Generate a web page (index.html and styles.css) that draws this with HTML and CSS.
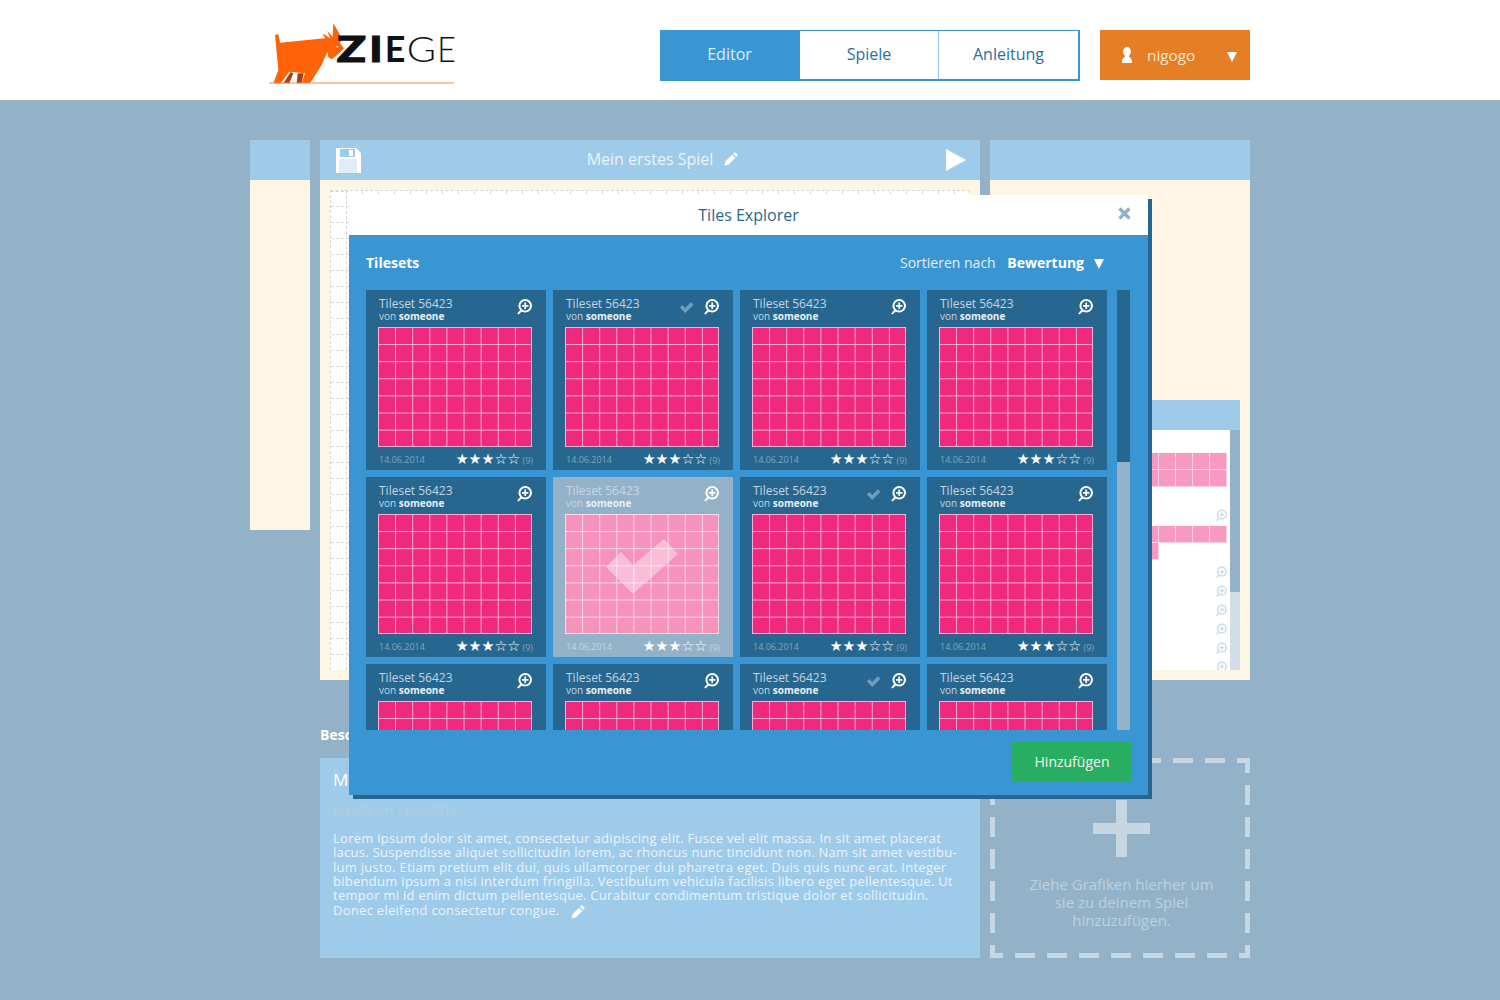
FILE: index.html
```html
<!DOCTYPE html>
<html lang="de">
<head>
  <meta charset="UTF-8" />
  <title>Ziege - Editor</title>
  <link rel="stylesheet" href="styles.css">
</head>
<body>
  <!-- icons used more than once -->
  <svg class="icon-defs" width="0" height="0">
    <symbol id="i-zoom" viewBox="0 0 16 16">
      <circle cx="9.2" cy="6.8" r="5.8" fill="none" stroke="currentColor" stroke-width="2"/>
      <path d="M9.2 3.600v6.400M6 6.800h6.400" fill="none" stroke="currentColor" stroke-width="1.700"/>
      <path d="M4.600 10.600l-3.400 3.800 1.200 1 3.800-3.200z" fill="currentColor"/>
    </symbol>
    <symbol id="i-check" viewBox="0 0 16 13">
      <path d="M1 6.500l2.600-2.600 3 3L12.600.8 15.400 3.500 6.600 12.400z" fill="currentColor"/>
    </symbol>
    <symbol id="i-pencil" viewBox="0 0 14 14">
      <path d="M0.500 13.500l1-4.200 6.600-6.600 3.200 3.200-6.600 6.600zM9 1.800l1-1c.5-.5 1.200-.5 1.700 0l1.500 1.500c.5.5.5 1.200 0 1.700l-1 1z" fill="currentColor"/>
    </symbol>
  </svg>

  <header class="topbar">
    <div class="wrap">
      <a class="logo" href="#">
        <svg width="230" height="90" viewBox="0 0 690 270">
          <path d="M100 220l22-34 8 4-12 30zM140 220l3-30h18l-6 30z" fill="#a8430c"/>
          <path d="M75 75l10-3 5 26 135-13-7-15 22 15-8-23 16 18 2-40 12 20 13 25-5 15 12 15-20 20-17 13-10-6-3-17-17 40-35 55h-25l10-30-47-5-26 35H70l15-40z" fill="#ff6209"/>
          <circle cx="262" cy="110" r="3" fill="#fff"/>
          <path d="M57 219h556" stroke="#f58a50" stroke-width="3"/>
          <text class="logo-heavy" x="260" y="157" textLength="88" lengthAdjust="spacingAndGlyphs">Z</text>
          <text class="logo-heavy" x="358" y="157" textLength="40" lengthAdjust="spacingAndGlyphs">I</text>
          <text class="logo-mid" x="404" y="157" textLength="62" lengthAdjust="spacingAndGlyphs">E</text>
          <text class="logo-thin" x="470" y="157" textLength="88" lengthAdjust="spacingAndGlyphs">G</text>
          <text class="logo-thin" x="562" y="157" textLength="56" lengthAdjust="spacingAndGlyphs">E</text>
        </svg>
      </a>
      <nav class="mainnav">
        <a class="active" href="#">Editor</a>
        <a href="#">Spiele</a>
        <a href="#">Anleitung</a>
      </nav>
      <div class="usermenu">
        <svg class="user-icon" width="12" height="16" viewBox="0 0 12 16">
          <path d="M6 0c2.300 0 3.900 1.900 3.900 4.400 0 1.900-.8 3.400-1.900 4.300 0 1.600 3 2.800 3 5.300v2H1v-2c0-2.500 3-3.700 3-5.300C2.900 7.800 2.100 6.300 2.100 4.400 2.100 1.900 3.700 0 6 0z" fill="#fff"/>
        </svg>
        <span class="user-name">nigogo</span>
        <span class="tri"></span>
      </div>
    </div>
  </header>

  <main class="wrap">
    <div class="panels">
      <section class="panel panel-left">
        <div class="panel-head"></div>
        <div class="panel-body"></div>
      </section>

      <section class="panel panel-mid">
        <div class="panel-head">
          <svg class="floppy" width="25" height="25" viewBox="0 0 25 25">
            <path d="M0 0h20l5 5v20H0z" fill="#fff"/>
            <path d="M4 1h15v8H4z" fill="#9ecbea"/>
            <path d="M13 2h4v6h-4z" fill="#fff"/>
            <path d="M3 11h18v14H3z" fill="#deedf8"/>
          </svg>
          <span class="game-title">Mein erstes Spiel</span>
          <svg class="pencil" width="14" height="14"><use href="#i-pencil"/></svg>
          <svg class="play" width="20" height="22" viewBox="0 0 20 22"><path d="M0 0l20 11L0 22z" fill="#fff"/></svg>
        </div>
        <div class="panel-body">
          <div class="canvas">
            <div class="canvas-ticks"></div>
            <div class="canvas-rows"></div>
          </div>
        </div>
      </section>

      <section class="panel panel-right">
        <div class="panel-head"></div>
        <div class="panel-body">
          <div class="mylist">
            <div class="mylist-head"></div>
            <div class="mylist-main">
              <div class="mylist-items">
                <div class="strip"></div>
                <svg class="mini-zoom first"><use href="#i-zoom"/></svg>
                <div class="strip strip-one"></div>
                <div class="strip strip-stub"></div>
                <svg class="mini-zoom second"><use href="#i-zoom"/></svg>
                <svg class="mini-zoom"><use href="#i-zoom"/></svg>
                <svg class="mini-zoom"><use href="#i-zoom"/></svg>
                <svg class="mini-zoom"><use href="#i-zoom"/></svg>
                <svg class="mini-zoom"><use href="#i-zoom"/></svg>
                <svg class="mini-zoom"><use href="#i-zoom"/></svg>
              </div>
              <div class="mylist-scroll"><div class="mylist-thumb"></div></div>
            </div>
          </div>
        </div>
      </section>
    </div>

    <div class="lower">
      <section class="details">
        <h3>Beschreibung</h3>
        <div class="details-box">
          <h4>Mein erstes Spiel</h4>
          <div class="created">Erstellt am 14.06.2014</div>
          <p>Lorem ipsum dolor sit amet, consectetur adipiscing elit. Fusce vel elit massa. In sit amet placerat<br>
          lacus. Suspendisse aliquet sollicitudin lorem, ac rhoncus nunc tincidunt non. Nam sit amet vestibu-<br>
          lum justo. Etiam pretium elit dui, quis ullamcorper dui pharetra eget. Duis quis nunc erat. Integer<br>
          bibendum ipsum a nisi interdum fringilla. Vestibulum vehicula facilisis libero eget pellentesque. Ut<br>
          tempor mi id enim dictum pellentesque. Curabitur condimentum tristique dolor et sollicitudin.<br>
          Donec eleifend consectetur congue. <svg class="pencil" width="14" height="14"><use href="#i-pencil"/></svg></p>
        </div>
      </section>

      <section class="dropzone">
        <svg class="dropzone-frame" width="260" height="200">
          <path class="dash-top" d="M0 2.500H260"/>
          <path class="dash-bottom" d="M0 197.500H260"/>
          <path class="dash-v" d="M2.500 0V200M257.500 0V200"/>
        </svg>
        <div class="plus"></div>
        <p>Ziehe Grafiken hierher um<br>sie zu deinem Spiel<br>hinzuzufügen.</p>
      </section>
    </div>
  </main>

  <div class="modal">
    <div class="modal-head">
      Tiles Explorer
      <svg class="modal-close" width="13" height="13" viewBox="0 0 13 13">
        <path d="M1.500 1.500l10 10M11.500 1.500l-10 10" stroke="#93b1c6" stroke-width="3.400" fill="none"/>
      </svg>
    </div>
    <div class="modal-body">
      <div class="modal-bar">
        <strong>Tilesets</strong>
        <div class="sort">Sortieren nach <strong>Bewertung</strong><span class="tri"></span></div>
      </div>
      <div class="explorer">
        <div class="tileset-grid">

          <article class="tileset">
            <div class="tileset-top">
              <div class="tileset-name">Tileset 56423<small>von <b>someone</b></small></div>
              <svg class="zoom"><use href="#i-zoom"/></svg>
            </div>
            <div class="tiles"></div>
            <div class="tileset-foot"><span>14.06.2014</span><span class="rating"><i>★★★☆☆</i> (9)</span></div>
          </article>

          <article class="tileset">
            <div class="tileset-top">
              <div class="tileset-name">Tileset 56423<small>von <b>someone</b></small></div>
              <svg class="added"><use href="#i-check"/></svg>
              <svg class="zoom"><use href="#i-zoom"/></svg>
            </div>
            <div class="tiles"></div>
            <div class="tileset-foot"><span>14.06.2014</span><span class="rating"><i>★★★☆☆</i> (9)</span></div>
          </article>

          <article class="tileset">
            <div class="tileset-top">
              <div class="tileset-name">Tileset 56423<small>von <b>someone</b></small></div>
              <svg class="zoom"><use href="#i-zoom"/></svg>
            </div>
            <div class="tiles"></div>
            <div class="tileset-foot"><span>14.06.2014</span><span class="rating"><i>★★★☆☆</i> (9)</span></div>
          </article>

          <article class="tileset">
            <div class="tileset-top">
              <div class="tileset-name">Tileset 56423<small>von <b>someone</b></small></div>
              <svg class="zoom"><use href="#i-zoom"/></svg>
            </div>
            <div class="tiles"></div>
            <div class="tileset-foot"><span>14.06.2014</span><span class="rating"><i>★★★☆☆</i> (9)</span></div>
          </article>

          <article class="tileset">
            <div class="tileset-top">
              <div class="tileset-name">Tileset 56423<small>von <b>someone</b></small></div>
              <svg class="zoom"><use href="#i-zoom"/></svg>
            </div>
            <div class="tiles"></div>
            <div class="tileset-foot"><span>14.06.2014</span><span class="rating"><i>★★★☆☆</i> (9)</span></div>
          </article>

          <article class="tileset selected">
            <div class="tileset-top">
              <div class="tileset-name">Tileset 56423<small>von <b>someone</b></small></div>
              <svg class="zoom"><use href="#i-zoom"/></svg>
            </div>
            <div class="tiles">
              <svg class="big-check" width="72" height="55" viewBox="0 0 72 55"><path d="M0 28L15 13 27 26 58 0 72 15 27 55z" fill="#fff"/></svg>
            </div>
            <div class="tileset-foot"><span>14.06.2014</span><span class="rating"><i>★★★☆☆</i> (9)</span></div>
          </article>

          <article class="tileset">
            <div class="tileset-top">
              <div class="tileset-name">Tileset 56423<small>von <b>someone</b></small></div>
              <svg class="added"><use href="#i-check"/></svg>
              <svg class="zoom"><use href="#i-zoom"/></svg>
            </div>
            <div class="tiles"></div>
            <div class="tileset-foot"><span>14.06.2014</span><span class="rating"><i>★★★☆☆</i> (9)</span></div>
          </article>

          <article class="tileset">
            <div class="tileset-top">
              <div class="tileset-name">Tileset 56423<small>von <b>someone</b></small></div>
              <svg class="zoom"><use href="#i-zoom"/></svg>
            </div>
            <div class="tiles"></div>
            <div class="tileset-foot"><span>14.06.2014</span><span class="rating"><i>★★★☆☆</i> (9)</span></div>
          </article>

          <article class="tileset">
            <div class="tileset-top">
              <div class="tileset-name">Tileset 56423<small>von <b>someone</b></small></div>
              <svg class="zoom"><use href="#i-zoom"/></svg>
            </div>
            <div class="tiles"></div>
          </article>

          <article class="tileset">
            <div class="tileset-top">
              <div class="tileset-name">Tileset 56423<small>von <b>someone</b></small></div>
              <svg class="zoom"><use href="#i-zoom"/></svg>
            </div>
            <div class="tiles"></div>
          </article>

          <article class="tileset">
            <div class="tileset-top">
              <div class="tileset-name">Tileset 56423<small>von <b>someone</b></small></div>
              <svg class="added"><use href="#i-check"/></svg>
              <svg class="zoom"><use href="#i-zoom"/></svg>
            </div>
            <div class="tiles"></div>
          </article>

          <article class="tileset">
            <div class="tileset-top">
              <div class="tileset-name">Tileset 56423<small>von <b>someone</b></small></div>
              <svg class="zoom"><use href="#i-zoom"/></svg>
            </div>
            <div class="tiles"></div>
          </article>

        </div>
        <div class="explorer-scroll"><div class="explorer-thumb"></div></div>
      </div>
      <div class="modal-foot">
        <button class="add-btn">Hinzufügen</button>
      </div>
    </div>
  </div>
</body>
</html>
```

FILE: styles.css
```css
* {
  box-sizing: border-box;
}

html, body {
  margin: 0;
  height: 1000px;
  overflow: hidden;
}

body {
  font-family: "Open Sans", "Liberation Sans", sans-serif;
  background-color: #94b2c7;
  color: #fff;
  position: relative;
}

.icon-defs {
  position: absolute;
}

.wrap {
  width: 1000px;
  margin: 0 auto;
}

.tri {
  display: inline-block;
  width: 0;
  height: 0;
  border-left: 5.500px solid transparent;
  border-right: 5.500px solid transparent;
  border-top: 10px solid #fff;
}

/* header */
.topbar {
  background-color: #fff;
  height: 100px;
}

.topbar .wrap {
  display: flex;
  align-items: flex-start;
}

.logo {
  display: block;
  margin-top: 10px;
  height: 90px;
}

.logo text {
  font-family: Lato, "Liberation Sans", sans-serif;
  font-size: 107px;
  fill: #111;
}

.logo-heavy {
  font-weight: 900;
  stroke: #111;
  stroke-width: 3px;
}

.logo-mid {
  font-weight: 700;
}

.logo-thin {
  font-weight: 300;
}

.mainnav {
  display: flex;
  width: 420px;
  height: 51px;
  margin: 30px 0 0 auto;
  background-color: #fff;
  border: 1px solid #3a96d2;
  border-width: 1px 2px 2px 0;
}

.mainnav a {
  width: 139px;
  color: #2a6f9e;
  font-size: 16px;
  line-height: 47px;
  text-align: center;
  text-decoration: none;
  border-right: 1px solid #8fc5e8;
}

.mainnav a:last-child {
  border-right: 0;
}

.mainnav a.active {
  width: 140px;
  padding-right: 1px;
  background-color: #3a96d2;
  color: #ddeefa;
  border-right: 0;
}

.usermenu {
  display: flex;
  align-items: center;
  width: 150px;
  height: 50px;
  margin: 30px 0 0 20px;
  padding: 0 13px 0 21px;
  background-color: #e67e26;
  font-size: 15.300px;
}

.user-name {
  margin-left: 14px;
  margin-top: -1px;
  flex: 1;
  color: #fbe6d2;
}

.usermenu .tri {
  margin-top: 4px;
}

/* the three tool panels */
.panels {
  display: flex;
  gap: 10px;
  align-items: flex-start;
  padding-top: 40px;
}

.panel-head {
  height: 40px;
  background-color: #9ecbea;
}

.panel-body {
  background-color: #fef6e4;
}

.panel-left {
  width: 60px;
}

.panel-left .panel-body {
  height: 350px;
}

.panel-mid {
  width: 660px;
}

.panel-right {
  width: 260px;
}

.panel-mid .panel-head {
  display: flex;
  align-items: center;
  position: relative;
  justify-content: center;
  padding-bottom: 2px;
  font-size: 16px;
  color: #e9f3fb;
}

.floppy {
  position: absolute;
  left: 16px;
  top: 8px;
}

.panel-head .pencil {
  margin-left: 11px;
  margin-right: -25px;
}

.play {
  position: absolute;
  left: 626px;
  top: 9px;
}

.pencil {
  color: #fff;
}

.panel-mid .panel-body,
.panel-right .panel-body {
  height: 500px;
  padding: 10px;
}

.canvas {
  position: relative;
  height: 480px;
  background-color: #fff;
  border: 1px dashed #d8d8d8;
  border-bottom: 0;
}

/* little marks along the top edge of the map */
.canvas-ticks {
  position: absolute;
  top: 0;
  left: 15px;
  right: 0;
  height: 3px;
  background: repeating-linear-gradient(90deg, #d8d8d8 0 1px, transparent 1px 16px);
}

.canvas-rows {
  position: absolute;
  top: 0;
  left: 0;
  bottom: 0;
  width: 18px;
  background: repeating-linear-gradient(90deg, #d8d8d8 0 3px, transparent 3px 5px);
  -webkit-mask-image: repeating-linear-gradient(180deg, #000 0 1px, transparent 1px 16px);
  mask-image: repeating-linear-gradient(180deg, #000 0 1px, transparent 1px 16px);
  mask-position: 0 15px;
  -webkit-mask-position: 0 15px;
}

.canvas::after {
  content: "";
  position: absolute;
  top: 0;
  left: 15px;
  bottom: 0;
  border-left: 1px dashed #d8d8d8;
}

/* list of used tilesets on the right */
.mylist {
  margin-top: 210px;
}

.mylist-head {
  height: 30px;
  background-color: #9ecbea;
}

.mylist-main {
  display: flex;
  height: 240px;
  background-color: #fff;
}

.mylist-items {
  flex: 1;
  overflow: hidden;
  display: flex;
  flex-direction: column;
  padding: 23px 3px 0 6px;
}

.strip {
  flex: none;
  width: 221px;
  height: 34px;
  background-color: #f799c0;
  background-image:
    linear-gradient(90deg, #fcd3e4 1px, transparent 1px),
    linear-gradient(180deg, #fcd3e4 1px, transparent 1px);
  background-size: 17px 17px;
  background-position: -1px -1px;
}

.strip-one {
  height: 17px;
}

.strip-stub {
  width: 153px;
  height: 17px;
}

.mini-zoom {
  flex: none;
  width: 12px;
  height: 13px;
  margin: 6px 0 0 auto;
  color: #c9dcec;
}

.mini-zoom.first {
  margin-top: 22px;
  margin-bottom: 4px;
}

.mylist-scroll {
  width: 10px;
  background-color: #d1dee9;
}

.mylist-thumb {
  height: 162px;
  background-color: #94b2c7;
}

/* description and drop area */
.lower {
  display: flex;
  align-items: flex-end;
  gap: 10px;
  padding-left: 70px;
}

.details {
  width: 660px;
}

.details h3 {
  margin: 44px 0 12px;
  font-size: 14px;
  line-height: 22px;
}

.details-box {
  height: 200px;
  padding: 11px 13px;
  background-color: #9ecbea;
}

.details-box h4 {
  margin: 0;
  font-size: 17px;
  font-weight: 400;
  line-height: 22px;
}

.created {
  margin-top: 11px;
  font-size: 12px;
  line-height: 18px;
  color: #b9cbd9;
}

.details-box p {
  margin: 11px 0 0;
  font-size: 13px;
  letter-spacing: 0.28px;
  line-height: 14.350px;
  color: #eaf4fb;
}

.details-box .pencil {
  width: 14px;
  height: 14px;
  margin-left: 8px;
  vertical-align: -4px;
}

.dropzone {
  position: relative;
  width: 260px;
  height: 200px;
  text-align: center;
}

.dropzone-frame {
  position: absolute;
  top: 0;
  left: 0;
  fill: none;
  stroke: #c6d6e2;
  stroke-width: 5;
}

.dash-top {
  stroke-dasharray: 20 12;
  stroke-dashoffset: 9;
}

.dash-bottom {
  stroke-dasharray: 20 12;
  stroke-dashoffset: 7;
}

.dash-v {
  stroke-dasharray: 20 12;
  stroke-dashoffset: 5;
}

.plus {
  position: absolute;
  left: 103px;
  top: 42px;
  width: 57px;
  height: 57px;
  background:
    linear-gradient(#c6d6e2, #c6d6e2) center / 11px 100% no-repeat,
    linear-gradient(#c6d6e2, #c6d6e2) center / 100% 11px no-repeat;
}

.dropzone p {
  margin: 0;
  padding: 117px 0 0 3px;
  font-size: 15px;
  line-height: 18px;
  color: #bcd0de;
}

/* tiles explorer dialog */
.modal {
  position: absolute;
  top: 195px;
  left: 349px;
  width: 799px;
  height: 600px;
  box-shadow: 4px 4px 0 #27678f;
}

.modal-head {
  position: relative;
  height: 40px;
  background-color: #fff;
  color: #27688f;
  font-size: 16px;
  line-height: 41px;
  text-align: center;
}

.modal-close {
  position: absolute;
  right: 17px;
  top: 12px;
}

.modal-body {
  height: 560px;
  padding: 0 16px 0 17px;
  background-color: #3a96d2;
}

.modal-bar {
  display: flex;
  justify-content: space-between;
  height: 55px;
  padding: 18px 28px 0 0;
  font-size: 14px;
  line-height: 20px;
}

.sort {
  color: #e1eff9;
}

.sort strong {
  margin-left: 8px;
  color: #fff;
}

.sort .tri {
  margin-left: 10px;
  position: relative;
  top: 1px;
}

.explorer {
  display: flex;
  height: 440px;
}

.tileset-grid {
  display: grid;
  grid-template-columns: repeat(4, 180px);
  grid-auto-rows: 180px;
  gap: 7px;
  width: 741px;
  overflow: hidden;
}

.tileset {
  height: 180px;
  padding: 7px 13px 0 12px;
  background-color: #27678f;
}

.tileset.selected {
  background-color: #94b2c7;
}

.tileset-top {
  display: flex;
  align-items: flex-start;
  height: 30px;
}

.tileset-name {
  flex: 1;
  padding-left: 1px;
  font-size: 12px;
  line-height: 13px;
  color: #c3d6e4;
}

.tileset-name small {
  display: block;
  font-size: 10px;
  line-height: 12px;
}

.tileset-name b {
  color: #e6eff6;
}

.zoom {
  width: 16px;
  height: 16px;
  margin: 2px 1px 0 0;
  color: #fff;
}

.added {
  width: 15px;
  height: 13px;
  margin: 4px 9px 0 0;
  color: #6f9dbb;
}

.tiles {
  position: relative;
  width: 154px;
  height: 120px;
  background-color: #f0297e;
  background-image:
    linear-gradient(90deg, #f9b4d3 1.4px, transparent 1.4px),
    linear-gradient(180deg, #f9b4d3 1.4px, transparent 1.4px);
  background-size: 17.110px 17.110px;
  box-shadow: inset -1px -1px 0 #f9b4d3;
}

.selected .tiles {
  background-color: #f792bd;
  background-image:
    linear-gradient(90deg, #fcdbe9 1.4px, transparent 1.4px),
    linear-gradient(180deg, #fcdbe9 1.4px, transparent 1.4px);
  box-shadow: inset -1px -1px 0 #fcdbe9;
}

.big-check {
  position: absolute;
  left: 41px;
  top: 25px;
  opacity: 0.4;
}

.tileset-foot {
  display: flex;
  justify-content: space-between;
  align-items: center;
  height: 24px;
  padding-left: 1px;
  font-size: 9px;
  color: #7ea4bf;
}

.selected .tileset-foot {
  color: #c3d6e4;
}

.rating i {
  font-family: "DejaVu Sans", sans-serif;
  font-style: normal;
  font-size: 14.400px;
  line-height: 14px;
  color: #fff;
}

.explorer-scroll {
  width: 13px;
  margin-left: 10px;
  background-color: #94b2c7;
}

.explorer-thumb {
  height: 172px;
  background-color: #27678f;
}

.modal-foot {
  display: flex;
  justify-content: flex-end;
  padding-top: 12px;
}

.add-btn {
  width: 120px;
  height: 40px;
  padding: 0 0 2px;
  border: 0;
  background-color: #27ae60;
  color: #eefaf3;
  font-family: inherit;
  font-size: 14px;
}
```
